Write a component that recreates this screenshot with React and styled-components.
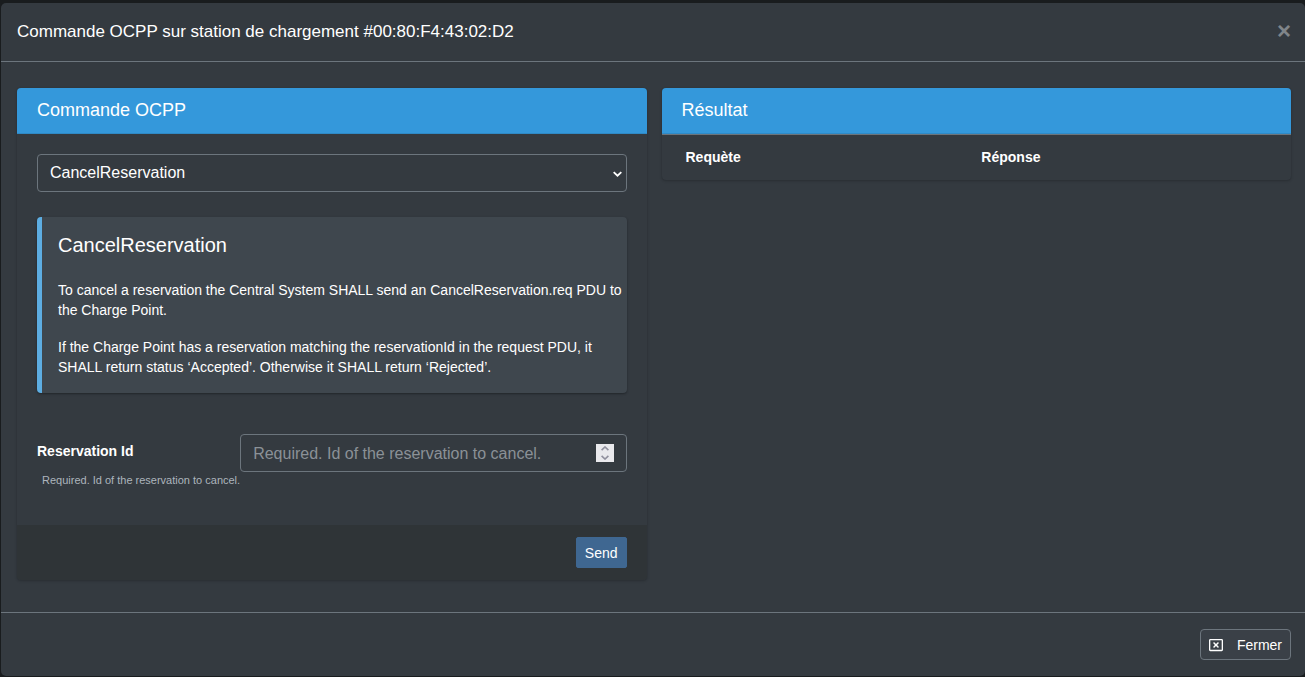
import React from 'react';
import styled, { createGlobalStyle } from 'styled-components';
import { FaRegWindowClose } from 'react-icons/fa';

const GlobalStyle = createGlobalStyle`
  *, *::before, *::after {
    box-sizing: border-box;
  }
  body {
    margin: 0;
    background: #191c1e;
    color: #fff;
    font-family: "Liberation Sans", Arial, sans-serif;
    font-size: 14px;
    line-height: 20px;
  }
  button, input, select {
    font-family: inherit;
    color: inherit;
  }
`;

const Modal = styled.div`
  margin: 3px 0 1px 1px;
  background: #343a40;
  border-radius: 5px;
`;

const ModalHeader = styled.header`
  display: flex;
  align-items: flex-start;
  justify-content: space-between;
  height: 59px;
  padding: 16px 14px 16px 16px;
  border-bottom: 1px solid #6c757d;
`;

const ModalTitle = styled.h4`
  margin: 0;
  font-size: 17px;
  font-weight: 400;
  line-height: 26px;
`;

const CloseButton = styled.button`
  padding: 0;
  border: 0;
  background: none;
  color: #80858a;
  font-size: 24px;
  font-weight: 700;
  line-height: 24px;
`;

const ModalBody = styled.div`
  display: grid;
  grid-template-columns: 1fr 1fr;
  align-items: start;
  gap: 15px;
  padding: 26px 14px 32px 16px;
`;

const ModalFooter = styled.footer`
  display: flex;
  justify-content: flex-end;
  padding: 16px 14px 16px 16px;
  border-top: 1px solid #6c757d;
`;

const Card = styled.section`
  border-radius: 4px;
  background: #343a40;
  box-shadow: 0 0 1px rgba(0, 0, 0, .13), 0 1px 3px rgba(0, 0, 0, .2);
  overflow: hidden;
`;

const CardHeader = styled.div`
  padding: 10px 20px 11px;
  background: #3498db;
  border-bottom: 1px solid #2f89c5;
`;

const CardTitle = styled.h3`
  margin: 0;
  font-size: 18px;
  font-weight: 400;
  line-height: 24px;
`;

const CardBody = styled.div`
  padding: 20px 20px 36px;
`;

const CardFooter = styled.div`
  display: flex;
  justify-content: flex-end;
  padding: 12px 20px;
  background: #2f3437;
`;

const SelectWrapper = styled.div`
  position: relative;

  svg {
    position: absolute;
    top: 17px;
    right: 5px;
    pointer-events: none;
  }
`;

const Select = styled.select`
  display: block;
  appearance: none;
  width: 100%;
  height: 38px;
  padding: 0 24px 2px 12px;
  border: 1px solid #6c757d;
  border-radius: 4px;
  background: #343a40;
  font-size: 16px;
`;

const Callout = styled.div`
  margin: 25px 0 41px;
  padding: 16px 4px 16px 16px;
  border-left: 5px solid #5dade2;
  border-radius: 4px;
  background: #3f474e;
  box-shadow: 0 1px 3px rgba(0, 0, 0, .12), 0 1px 2px rgba(0, 0, 0, .24);

  h5 {
    margin: 0 0 23px;
    font-size: 20px;
    font-weight: 400;
    line-height: 24px;
  }
  p {
    margin: 0 0 17px;
  }
  p:last-child {
    margin: 0;
  }
`;

const FormRow = styled.div`
  display: grid;
  grid-template-columns: auto 1fr;
`;

const Label = styled.label`
  display: block;
  margin: 7px 0 10px;
  font-weight: 700;
`;

const Help = styled.small`
  display: block;
  padding-left: 5px;
  color: #adb5bd;
  font-size: 11px;
  line-height: 18px;
`;

const NumberBox = styled.div`
  display: flex;
  align-items: center;
  height: 38px;
  padding: 0 12px;
  border: 1px solid #6c757d;
  border-radius: 4px;
  background: #343a40;
`;

const NumberInput = styled.input`
  flex: 1;
  min-width: 0;
  padding: 2px 0 0;
  border: 0;
  background: none;
  font-size: 16px;
  line-height: 24px;
  appearance: textfield;

  &::placeholder {
    color: #8b9197;
    opacity: 1;
  }
  &::-webkit-inner-spin-button {
    appearance: none;
    margin: 0;
  }
`;

const Spinner = styled.div`
  display: flex;
  flex-direction: column;
  width: 18px;
  height: 18px;
  background: #e9e9ed;
`;

const SpinButton = styled.button`
  display: flex;
  flex: 1;
  align-items: center;
  justify-content: center;
  padding: 0;
  border: 0;
  background: none;
  color: #8f8f9d;
`;

const Button = styled.button`
  display: flex;
  align-items: center;
  gap: 14px;
  height: 31px;
  padding: 0 8px;
  border: 1px solid ${props => props.$primary ? '#3f6791' : '#6c757d'};
  border-radius: ${props => props.$primary ? '2px' : '4px'};
  background: ${props => props.$primary ? '#3f6791' : '#3a4047'};
  font-size: 14px;
  line-height: 20px;
`;

const ResultTable = styled.table`
  width: 100%;
  table-layout: fixed;
  border-collapse: collapse;
  border-top: 1px solid #6c757d;

  th {
    height: 45px;
    padding: 0 24px;
    font-weight: 700;
    text-align: left;
  }
  th:first-child {
    width: 47%;
  }
`;

const Chevron = ({ up, width = 8, height = 5 }) => (
  <svg width={width} height={height} viewBox="0 0 8 5" fill="none" stroke="currentColor" strokeWidth="1.6" aria-hidden="true">
    <path d={up ? 'M0.6 4.2L4 1L7.4 4.2' : 'M0.6 0.8L4 4L7.4 0.8'} />
  </svg>
);

class CommandForm extends React.Component {
  constructor(props) {
    super(props)

    this.handleChange = this.handleChange.bind(this);
    this.state = {
      reservationId: '',
    }
  }

  handleChange(event) {
    this.setState({ reservationId: event.target.value });
  }

  step(amount) {
    this.setState({ reservationId: String(Number(this.state.reservationId) + amount) });
  }

  render() {
    return (
      <Card>
        <CardHeader>
          <CardTitle>Commande OCPP</CardTitle>
        </CardHeader>
        <CardBody>
          <SelectWrapper>
            <Select aria-label="Commande OCPP" defaultValue="CancelReservation">
              <option>CancelReservation</option>
            </Select>
            <Chevron width={9} height={6} />
          </SelectWrapper>

          <Callout>
            <h5>CancelReservation</h5>
            <p>To cancel a reservation the Central System SHALL send an CancelReservation.req PDU to the Charge Point.</p>
            <p>If the Charge Point has a reservation matching the reservationId in the request PDU, it SHALL return status ‘Accepted’. Otherwise it SHALL return ‘Rejected’.</p>
          </Callout>

          <FormRow>
            <div>
              <Label htmlFor="reservationId">Reservation Id</Label>
              <Help id="reservationHelp">Required. Id of the reservation to cancel.</Help>
            </div>
            <NumberBox>
              <NumberInput
                id="reservationId"
                type="number"
                aria-describedby="reservationHelp"
                placeholder="Required. Id of the reservation to cancel."
                value={this.state.reservationId}
                onChange={this.handleChange}
              />
              <Spinner>
                <SpinButton type="button" aria-label="+1" onClick={() => this.step(1)}><Chevron up /></SpinButton>
                <SpinButton type="button" aria-label="-1" onClick={() => this.step(-1)}><Chevron /></SpinButton>
              </Spinner>
            </NumberBox>
          </FormRow>
        </CardBody>
        <CardFooter>
          <Button type="button" $primary>Send</Button>
        </CardFooter>
      </Card>
    );
  }
}

const Result = () => (
  <Card>
    <CardHeader>
      <CardTitle>Résultat</CardTitle>
    </CardHeader>
    <ResultTable>
      <thead>
        <tr>
          <th scope="col">Requète</th>
          <th scope="col">Réponse</th>
        </tr>
      </thead>
    </ResultTable>
  </Card>
);

const App = () => (
  <>
    <GlobalStyle />
    <Modal role="dialog" aria-labelledby="modalTitle">
      <ModalHeader>
        <ModalTitle id="modalTitle">Commande OCPP sur station de chargement #00:80:F4:43:02:D2</ModalTitle>
        <CloseButton type="button" aria-label="Fermer">×</CloseButton>
      </ModalHeader>
      <ModalBody>
        <CommandForm />
        <Result />
      </ModalBody>
      <ModalFooter>
        <Button type="button">
          <FaRegWindowClose size={14} />
          Fermer
        </Button>
      </ModalFooter>
    </Modal>
  </>
);

export default App;
